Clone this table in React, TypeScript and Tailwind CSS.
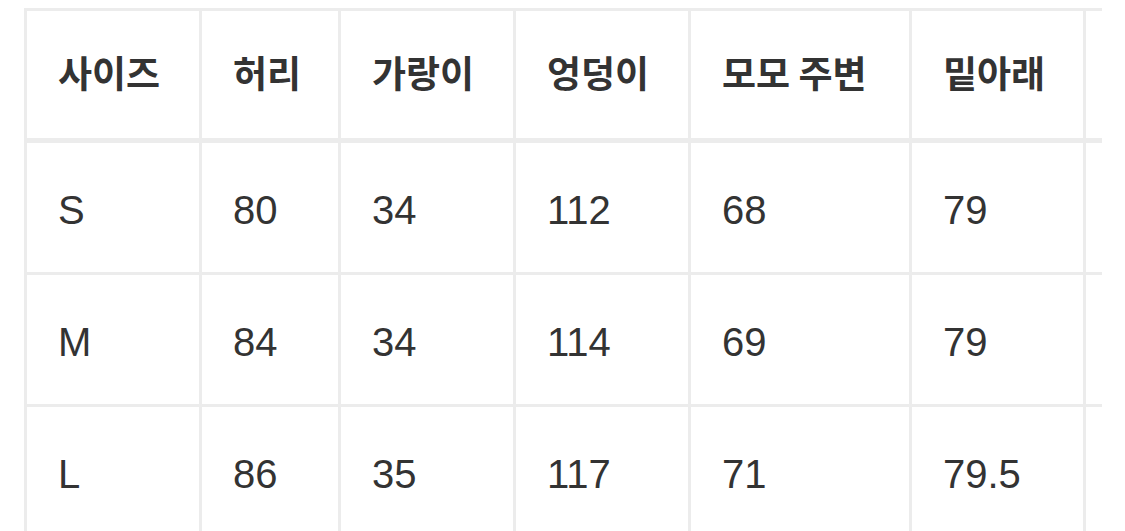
const columns = [
  { label: '사이즈', width: 'w-[175px]' },
  { label: '허리', width: 'w-[139px]' },
  { label: '가랑이', width: 'w-[175px]' },
  { label: '엉덩이', width: 'w-[175px]' },
  { label: '모모 주변', width: 'w-[221px]' },
  { label: '밑아래', width: 'w-[174px]' },
  { label: '', width: 'w-[200px]' },
]

const rows = [
  ['S', '80', '34', '112', '68', '79', ''],
  ['M', '84', '34', '114', '69', '79', ''],
  ['L', '86', '35', '117', '71', '79.5', ''],
]

export default function App() {
  return (
    <div className="w-[1125px] h-[531px] overflow-hidden bg-white pl-[24px] pt-[8px]">
      <div className="w-[1078px] overflow-hidden">
        {/* Header */}
        <div className="flex w-[1259px] h-[135px] border-t-[3px] border-b-[5px] border-[#ececec]">
          {columns.map((col, i) => (
            <div
              key={i}
              className={`${col.width} shrink-0 border-l-[3px] border-[#ececec] flex items-center pl-[31px] pb-[4px] text-[37px] font-bold text-[#333333] font-['Noto_Sans_CJK_KR','Noto_Sans',sans-serif]`}
            >
              {col.label}
            </div>
          ))}
        </div>

        {/* Body */}
        {rows.map((row, r) => (
          <div key={r} className="flex w-[1259px] h-[132px] border-b-[3px] border-[#ececec]">
            {row.map((cell, i) => (
              <div
                key={i}
                className={`${columns[i].width} shrink-0 border-l-[3px] border-[#ececec] flex items-center pl-[31px] pt-[5px] text-[40px] text-[#333333] font-['Liberation_Sans',Arial,sans-serif]`}
              >
                {cell}
              </div>
            ))}
          </div>
        ))}
      </div>
    </div>
  )
}
